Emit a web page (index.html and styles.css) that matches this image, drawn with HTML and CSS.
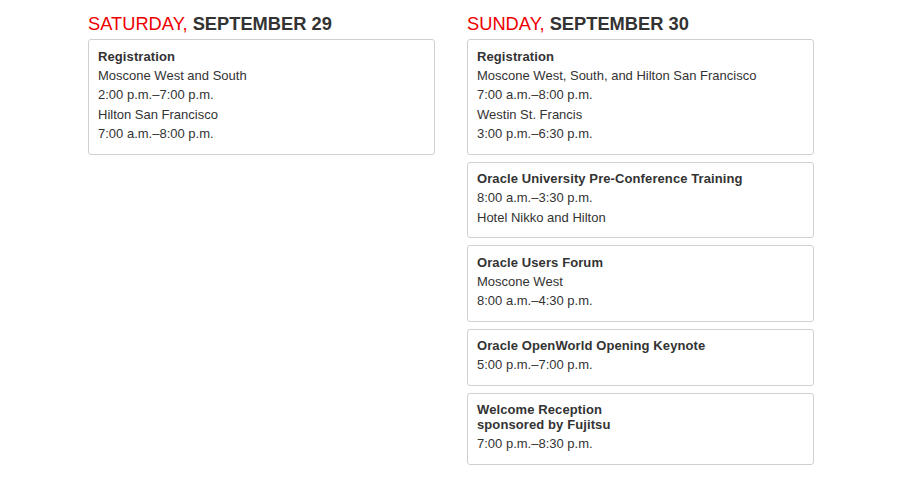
FILE: index.html
```html
<!DOCTYPE html>
<html lang="en">
<head>
    <meta charset="UTF-8">
    <meta name="viewport" content="width=device-width, initial-scale=1.0">
    <title>Schedule</title>
    <link rel="stylesheet" href="styles.css">
</head>
<body>
    <div class="schedule">
        <div class="day-col">
            <h2 class="day-title"><span class="day-name">SATURDAY,</span> SEPTEMBER 29</h2>
            <div class="event-card">
                <div class="event-title">Registration</div>
                <div class="event-line">Moscone West and South</div>
                <div class="event-line">2:00 p.m.–7:00 p.m.</div>
                <div class="event-line">Hilton San Francisco</div>
                <div class="event-line">7:00 a.m.–8:00 p.m.</div>
            </div>
        </div>

        <div class="day-col">
            <h2 class="day-title"><span class="day-name">SUNDAY,</span> SEPTEMBER 30</h2>
            <div class="event-card">
                <div class="event-title">Registration</div>
                <div class="event-line">Moscone West, South, and Hilton San Francisco</div>
                <div class="event-line">7:00 a.m.–8:00 p.m.</div>
                <div class="event-line">Westin St. Francis</div>
                <div class="event-line">3:00 p.m.–6:30 p.m.</div>
            </div>
            <div class="event-card">
                <div class="event-title">Oracle University Pre-Conference Training</div>
                <div class="event-line">8:00 a.m.–3:30 p.m.</div>
                <div class="event-line">Hotel Nikko and Hilton</div>
            </div>
            <div class="event-card">
                <div class="event-title">Oracle Users Forum</div>
                <div class="event-line">Moscone West</div>
                <div class="event-line">8:00 a.m.–4:30 p.m.</div>
            </div>
            <div class="event-card">
                <div class="event-title">Oracle OpenWorld Opening Keynote</div>
                <div class="event-line">5:00 p.m.–7:00 p.m.</div>
            </div>
            <div class="event-card">
                <div class="event-title">Welcome Reception<br>sponsored by Fujitsu</div>
                <div class="event-line">7:00 p.m.–8:30 p.m.</div>
            </div>
        </div>
    </div>
</body>
</html>
```

FILE: styles.css
```css
body {
    margin: 0;
    background: #fff;
    font-family: "Liberation Sans", Arial, sans-serif;
    color: #333;
}

.schedule {
    display: grid;
    grid-template-columns: 347px 347px;
    column-gap: 32px;
    align-items: start;
    margin-left: 88px;
    padding-top: 13px;
}

.day-title {
    margin: 0 0 4px;
    font-size: 18.3px;
    line-height: 22px;
    font-weight: bold;
    color: #333;
}

.day-name {
    font-weight: normal;
    color: #ee0000;
}

.event-card {
    border: 1px solid #d0d0d0;
    border-radius: 3px;
    padding: 8.5px 9px 10px;
    margin-bottom: 7px;
}

.event-title {
    font-size: 13px;
    font-weight: bold;
    line-height: 15px;
    margin-bottom: 2px;
    letter-spacing: 0.1px;
}

.event-line {
    font-size: 13px;
    line-height: 19.5px;
}
```
